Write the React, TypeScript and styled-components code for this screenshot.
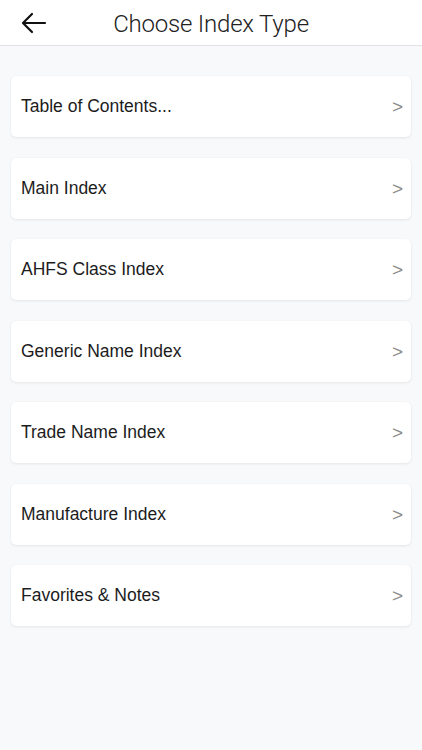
import React from "react";
import styled, { createGlobalStyle } from "styled-components";

const Global = createGlobalStyle`
  html, body { margin: 0; padding: 0; background: #f8f9fb; }
  body { font-family: "Liberation Sans", Arial, sans-serif; }
`;

const Page = styled.div`
  width: 422px;
  min-height: 750px;
  background: #f8f9fb;
`;

const Header = styled.header`
  height: 45px;
  background: #ffffff;
  border-bottom: 1px solid #e2e2e4;
  display: flex;
  align-items: center;
  position: relative;
  justify-content: center;
`;

const BackButton = styled.button`
  position: absolute;
  left: 20px;
  top: 10px;
  width: 28px;
  height: 26px;
  padding: 0;
  border: none;
  background: transparent;
  display: flex;
  align-items: center;
  justify-content: center;
`;

const Title = styled.h1`
  margin: 0;
  padding-top: 2px;
  font-family: "Roboto", "Liberation Sans", sans-serif;
  font-weight: 300;
  font-size: 24px;
  color: #222;
  letter-spacing: -0.2px;
`;

const List = styled.div`
  display: flex;
  flex-direction: column;
  gap: 20.5px;
  padding: 30px 11px 0 11px;
`;

const Card = styled.div`
  height: 61px;
  background: #fff;
  border-radius: 5px;
  box-shadow: 0 1px 3px rgba(0, 0, 0, 0.08), 0 0 1px rgba(0, 0, 0, 0.06);
  display: flex;
  align-items: center;
  justify-content: space-between;
  padding: 0 8px 0 10px;
`;

const Label = styled.span`
  font-family: "Liberation Sans", Arial, sans-serif;
  font-size: 17.5px;
  color: #1c1c1c;
`;

const Chevron = styled.span`
  font-family: "Liberation Sans", Arial, sans-serif;
  font-size: 19px;
  color: #8a8a8a;
  padding-top: 1px;
`;

const items = [
  "Table of Contents...",
  "Main Index",
  "AHFS Class Index",
  "Generic Name Index",
  "Trade Name Index",
  "Manufacture Index",
  "Favorites & Notes",
];

export default function App() {
  return (
    <Page>
      <Global />
      <Header>
        <BackButton aria-label="Back">
          <svg width="26" height="22" viewBox="0 0 26 22" fill="none">
            <path d="M24 11H3M11 2L2 11l9 9" stroke="#111" strokeWidth="2.2" strokeLinecap="round" strokeLinejoin="round" />
          </svg>
        </BackButton>
        <Title>Choose Index Type</Title>
      </Header>
      <List>
        {items.map((t) => (
          <Card key={t}>
            <Label>{t}</Label>
            <Chevron>&gt;</Chevron>
          </Card>
        ))}
      </List>
    </Page>
  );
}
